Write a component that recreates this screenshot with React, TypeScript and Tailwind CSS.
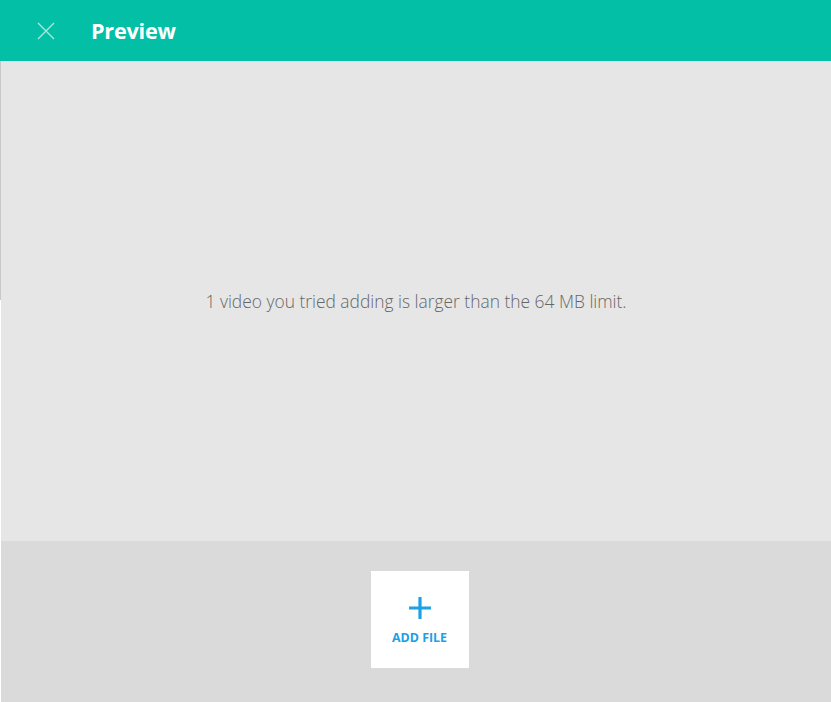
export default function App() {
  return (
    <div className="flex h-[702px] w-[831px] flex-col bg-white font-['Open_Sans',sans-serif]">
      {/* header */}
      <div className="flex h-[61px] shrink-0 items-center bg-[#02bfa6]">
        <button className="ml-[37px] flex h-[18px] w-[18px] items-center justify-center">
          <svg width="18" height="18" viewBox="0 0 18 18" fill="none">
            <path d="M1 1L17 17M17 1L1 17" stroke="#a7e8de" strokeWidth="1.4" />
          </svg>
        </button>
        <h1 className="ml-[36px] text-[21.6px] font-bold leading-none tracking-[-0.2px] text-white">Preview</h1>
      </div>

      <div className="flex flex-1 flex-row">
        {/* thin left edge */}
        <div className="flex w-px flex-col">
          <div className="h-[239px] bg-[#c9c9c9]" />
          <div className="flex-1 bg-white" />
        </div>

        <div className="flex flex-1 flex-col">
          {/* message area */}
          <div className="flex h-[480px] items-center justify-center bg-[#e6e6e6] pt-[1px]">
            <p className="text-[17.4px] font-light text-[#666666]">
              1 video you tried adding is larger than the 64 MB limit.
            </p>
          </div>

          {/* footer */}
          <div className="flex flex-1 justify-center bg-[#dadada] pl-[7px] pt-[30px]">
            <button className="flex h-[97px] w-[98px] flex-col items-center bg-white pt-[26px]">
              <svg width="22" height="22" viewBox="0 0 22 22">
                <path d="M11 0V22M0 11H22" stroke="#1ba1e6" strokeWidth="3.2" />
              </svg>
              <span className="mt-[13px] text-[12.4px] font-bold leading-none text-[#1ba1e6]">ADD FILE</span>
            </button>
          </div>
        </div>
      </div>
    </div>
  )
}
